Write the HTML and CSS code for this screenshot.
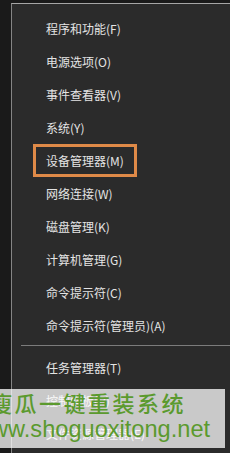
FILE: index.html
```html
<!DOCTYPE html>
<html lang="zh">
<head>
<meta charset="utf-8">
<link rel="stylesheet" href="styles.css">
</head>
<body>
<div class="menu">
  <div class="item"><span class="label">程序和功能(F)</span></div>
  <div class="item"><span class="label">电源选项(O)</span></div>
  <div class="item"><span class="label">事件查看器(V)</span></div>
  <div class="item"><span class="label">系统(Y)</span></div>
  <div class="item hl-row"><span class="hl">设备管理器(M)</span></div>
  <div class="item"><span class="label">网络连接(W)</span></div>
  <div class="item"><span class="label">磁盘管理(K)</span></div>
  <div class="item"><span class="label">计算机管理(G)</span></div>
  <div class="item"><span class="label">命令提示符(C)</span></div>
  <div class="item"><span class="label">命令提示符(管理员)(A)</span></div>
  <div class="sep"></div>
  <div class="item"><span class="label">任务管理器(T)</span></div>
  <div class="item"><span class="label">控制面板(P)</span></div>
  <div class="item"><span class="label">文件资源管理器(E)</span></div>
</div>
<div class="watermark">
  <div class="wm-cn">瘦瓜一键重装系统</div>
  <div class="wm-url">www.shoguoxitong.net</div>
</div>
</body>
</html>
```
FILE: styles.css
```css
html, body {
  margin: 0;
  padding: 0;
}
body {
  width: 230px;
  height: 453px;
  overflow: hidden;
  background: #1a1a1a;
  position: relative;
  font-family: "Noto Sans CJK SC", "Liberation Sans", sans-serif;
}
.menu {
  margin: 3px 0 0 11px;
  height: 450px;
  box-sizing: border-box;
  background: #2b2b2b;
  border-top: 1px solid #a6a6a6;
  border-left: 1px solid #858585;
  padding-top: 8px;
}
.item {
  height: 33px;
  display: flex;
  align-items: center;
  color: #e4e4e4;
  font-size: 12px;
  white-space: nowrap;
}
.label {
  padding-left: 34px;
}
.hl {
  margin-left: 21px;
  width: 104px;
  height: 33px;
  box-sizing: border-box;
  border: 3px solid #df8a48;
  padding-left: 10px;
  display: flex;
  align-items: center;
}
.sep {
  height: 1px;
  background: #7c7c7c;
  margin: 3px 0 5px 9px;
}
.watermark {
  position: absolute;
  left: 0;
  top: 389px;
  width: 225px;
  height: 59px;
  background: rgba(255, 255, 255, 0.75);
  overflow: hidden;
  white-space: nowrap;
  color: #5b9a2e;
}
.wm-cn {
  font-family: "Noto Sans CJK SC", sans-serif;
  font-weight: 500;
  font-size: 22px;
  line-height: 26px;
  letter-spacing: 2.5px;
  margin-left: -10px;
}
.wm-url {
  font-family: "Liberation Sans", sans-serif;
  font-size: 23.6px;
  line-height: 28px;
  margin-left: -26px;
}
```
